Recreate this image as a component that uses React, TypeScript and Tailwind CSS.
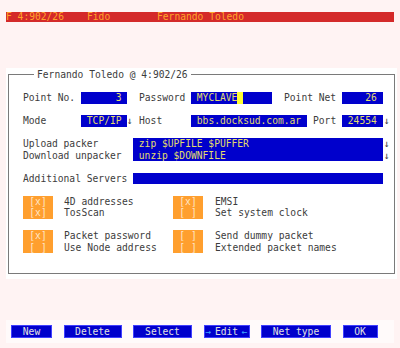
function Field({ className = '', children }: { className?: string; children?: React.ReactNode }) {
  return (
    <span className={`h-[11.5px] bg-[#0000cc] text-[#e2dc6c] whitespace-pre overflow-hidden ${className}`}>
      {children}
    </span>
  );
}

function Box({ top, bottom }: { top: string; bottom: string }) {
  return (
    <div className="w-[30px] h-[23px] bg-[#ff9f2e] text-[#ffe6c8] text-center whitespace-pre">
      <div>{top}</div>
      <div>{bottom}</div>
    </div>
  );
}

function Button({ className = '', children }: { className?: string; children: React.ReactNode }) {
  return (
    <div
      className={`h-[13px] border border-[#4040ff] bg-[#0000cc] text-[#e0e0e0] text-center leading-[11px] whitespace-pre ${className}`}
    >
      {children}
    </div>
  );
}

export default function App() {
  return (
    <div className="w-[400px] h-[348px] overflow-hidden bg-[#fff3f3] font-['DejaVu_Sans_Mono','Liberation_Mono',monospace] text-[9.64px] leading-[11.5px] text-[#3c3c3c]">
      {/* status bar */}
      <div className="pt-[12px] px-[6px]">
        <div className="h-[9.5px] bg-[#d42a2a] text-[#ffa528] leading-[9.5px] flex whitespace-pre">
          <span className="w-[81px]">F 4:902/26</span>
          <span className="w-[70px]">Fido</span>
          <span>Fernando Toledo</span>
        </div>
      </div>

      {/* node panel */}
      <div className="mt-[46.5px] ml-[6px] w-[391px] bg-white pt-[1px] px-[2px] pb-[5px]">
        <fieldset className="border border-[#7a7a7a] pl-[14px] pb-[19.5px]">
          <legend className="ml-[11px] px-[3px] leading-[11.5px] whitespace-pre">Fernando Toledo @ 4:902/26</legend>

          <div className="pt-[11.5px]">
            <div className="flex h-[11.5px]">
              <span className="w-[58px]">Point No.</span>
              <Field className="w-[46px]">      3 </Field>
              <span className="w-[12px]" />
              <span className="w-[52px]">Password</span>
              <Field className="w-[81px] flex">
                <span className="whitespace-pre"> MYCLAVE</span>
                <span className="w-[6px] h-[11.5px] bg-[#ffff33]" />
              </Field>
              <span className="w-[12px]" />
              <span className="w-[58px]">Point Net</span>
              <Field className="w-[41px]">    26 </Field>
            </div>

            <div className="flex h-[11.5px] mt-[11.5px]">
              <span className="w-[58px]">Mode</span>
              <Field className="w-[46px]"> TCP/IP </Field>
              <span className="w-[12px]">↓</span>
              <span className="w-[52px]">Host</span>
              <Field className="w-[116px]"> bbs.docksud.com.ar </Field>
              <span className="w-[6px]" />
              <span className="w-[29px]">Port</span>
              <Field className="w-[41px]"> 24554 </Field>
              <span className="pl-[1px]">↓</span>
            </div>

            <div className="mt-[11.5px]">
              <div className="flex h-[11.5px]">
                <span className="w-[110px]">Upload packer</span>
                <Field className="w-[250px]"> zip $UPFILE $PUFFER</Field>
                <span className="pl-[1px]">↓</span>
              </div>
              <div className="flex h-[11.5px]">
                <span className="w-[110px]">Download unpacker</span>
                <Field className="w-[250px]"> unzip $DOWNFILE</Field>
                <span className="pl-[1px]">↓</span>
              </div>
            </div>

            <div className="flex h-[11.5px] mt-[11.5px]">
              <span className="w-[110px]">Additional Servers</span>
              <Field className="w-[250px]" />
            </div>

            <div className="flex mt-[11.5px]">
              <Box top="[x]" bottom="[x]" />
              <div className="ml-[11px] w-[109px] whitespace-pre">
                <div>4D addresses</div>
                <div>TosScan</div>
              </div>
              <Box top="[x]" bottom="[ ]" />
              <div className="ml-[12px] whitespace-pre">
                <div>EMSI</div>
                <div>Set system clock</div>
              </div>
            </div>

            <div className="flex mt-[11.5px]">
              <Box top="[x]" bottom="[ ]" />
              <div className="ml-[11px] w-[109px] whitespace-pre">
                <div>Packet password</div>
                <div>Use Node address</div>
              </div>
              <Box top="[ ]" bottom="[ ]" />
              <div className="ml-[12px] whitespace-pre">
                <div>Send dummy packet</div>
                <div>Extended packet names</div>
              </div>
            </div>
          </div>
        </fieldset>
      </div>

      {/* command bar */}
      <div className="mt-[41px] mx-[6px] h-[23px] bg-[#fffafa] flex items-center gap-[11.5px] pl-[5px]">
        <Button className="w-[41px]">New</Button>
        <Button className="w-[58px]">Delete</Button>
        <Button className="w-[59px]">Select</Button>
        <Button className="w-[46px] flex justify-between px-[1px]">
          <span className="text-[#3fa8ff]">→</span>
          <span>Edit</span>
          <span className="text-[#3fa8ff]">←</span>
        </Button>
        <Button className="w-[70px]">Net type</Button>
        <Button className="w-[35px]">OK</Button>
      </div>
    </div>
  );
}
